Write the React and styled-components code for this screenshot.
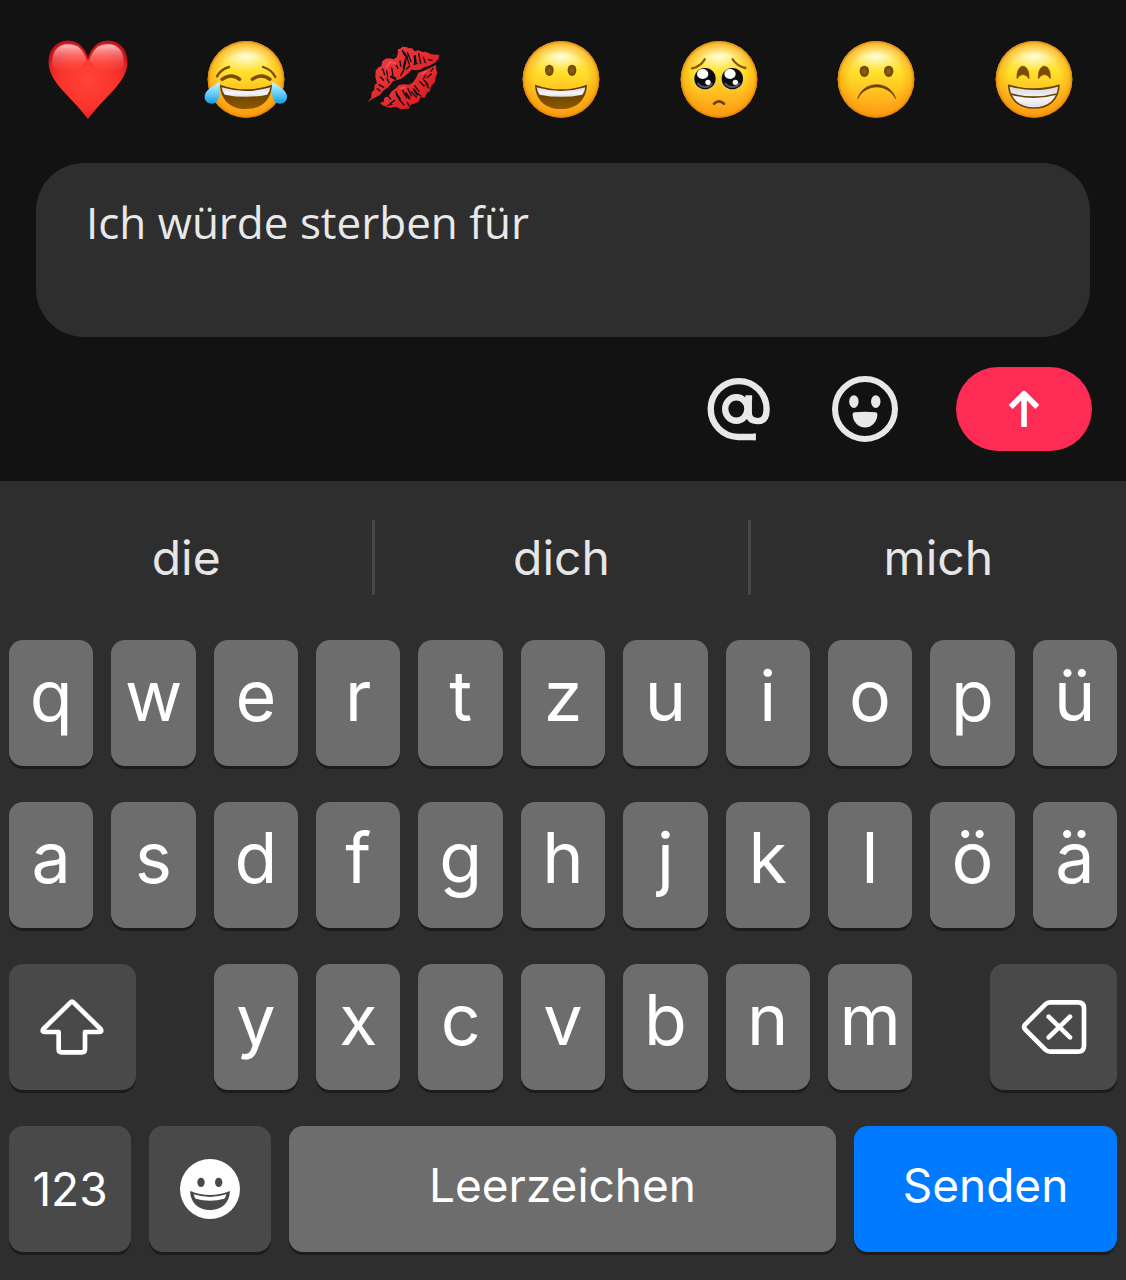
import React, { useState } from 'react';
import styled, { createGlobalStyle, css } from 'styled-components';

const GlobalStyle = createGlobalStyle`
  * { box-sizing: border-box; }
  body {
    margin: 0;
    background: #2e2e2e;
    font-family: Inter, "Liberation Sans", sans-serif;
  }
  button {
    border: 0;
    padding: 0;
    background: none;
    font-family: inherit;
    color: inherit;
    cursor: pointer;
  }
  svg { display: block; }
`;

const Composer = styled.section`
  background: #121212;
  padding-bottom: 30px;
`;

const EmojiBar = styled.div`
  display: grid;
  grid-template-columns: repeat(7, minmax(0, 1fr));
  padding: 37px 13px 42px 9px;
`;

const EmojiButton = styled.button`
  display: flex;
  justify-content: center;
`;

const MessageBox = styled.textarea`
  display: block;
  width: calc(100% - 72px);
  height: 174px;
  margin: 0 36px;
  padding: 31px 50px;
  border: 0;
  border-radius: 48px;
  outline: none;
  resize: none;
  background: #2e2e2e;
  color: #e8e8e8;
  font-family: "Open Sans", sans-serif;
  font-size: 44px;
  line-height: 56px;
`;

const Actions = styled.div`
  display: flex;
  justify-content: flex-end;
  align-items: center;
  padding: 30px 34px 0;
`;

const IconButton = styled.button`
  margin-right: 56px;
  color: #e8e8e8;
`;

const SendButton = styled.button`
  display: flex;
  align-items: center;
  justify-content: center;
  width: 136px;
  height: 84px;
  border-radius: 42px;
  background: #fe2c55;
  color: #fff;
`;

const Keyboard = styled.section`
  background: #2e2e2e;
  padding-bottom: 28px;
`;

const Suggestions = styled.div`
  display: grid;
  grid-template-columns: repeat(3, minmax(0, 1fr));
  padding: 39px 0 45px;
`;

const Suggestion = styled.button`
  height: 75px;
  color: #e6e6e6;
  font-size: 48px;
  line-height: 75px;

  &:not(:last-child) {
    border-right: 3px solid #484848;
  }
`;

const Rows = styled.div`
  display: grid;
  gap: 36px;
  padding: 0 9px;
`;

const LetterRow = styled.div`
  display: grid;
  grid-template-columns: repeat(11, minmax(0, 1fr));
  gap: 18px;
`;

const BottomRow = styled.div`
  display: grid;
  grid-template-columns: 122fr 122fr 547fr 263fr;
  gap: 18px;
`;

const Key = styled.button`
  display: flex;
  align-items: center;
  justify-content: center;
  min-width: 0;
  height: 126px;
  border-radius: 14px;
  background: ${({ $tone }) => ({ dark: '#494949', blue: '#007aff' }[$tone] || '#6d6d6d')};
  box-shadow: 0 3px 0 #1c1c1c;
  color: #fff;
  font-size: 46px;
  font-weight: 400;
  ${({ $letter }) => $letter && css`
    padding-bottom: 16px;
    font-size: 70px;
  `}
  ${({ $word }) => $word && css`
    padding-bottom: 8px;
  `}
`;

const WideKey = styled(Key)`
  grid-column: span 2;
  width: 68%;
  justify-self: ${({ $end }) => ($end ? 'end' : 'start')};
`;

const EmojiSvg = ({ children }) => (
  <svg width="84" height="84" viewBox="0 0 252 252" aria-hidden="true">{children}</svg>
);

// shared gradients for every yellow face
const Gradients = () => (
  <svg width="0" height="0" style={{ position: 'absolute' }} aria-hidden="true">
    <defs>
      <linearGradient id="face" x1="0" y1="0" x2="0" y2="1">
        <stop offset="0" stopColor="#ffdf5a" />
        <stop offset="0.15" stopColor="#ffeb66" />
        <stop offset="0.42" stopColor="#ffe02a" />
        <stop offset="0.72" stopColor="#ffb91e" />
        <stop offset="1" stopColor="#ff9c18" />
      </linearGradient>
      <radialGradient id="rim">
        <stop offset="0.66" stopColor="#f79a0c" stopOpacity="0" />
        <stop offset="0.92" stopColor="#f79a0c" stopOpacity="0.5" />
        <stop offset="1" stopColor="#d97800" stopOpacity="0.9" />
      </radialGradient>
      <radialGradient id="shine">
        <stop offset="0" stopColor="#fffef0" stopOpacity="0.9" />
        <stop offset="1" stopColor="#fff9a0" stopOpacity="0" />
      </radialGradient>
      <linearGradient id="teeth" x1="0" y1="0" x2="0" y2="1">
        <stop offset="0" stopColor="#d5d5dc" />
        <stop offset="0.6" stopColor="#f6f6fa" />
        <stop offset="1" stopColor="#dcdce2" />
      </linearGradient>
      <linearGradient id="mouth" x1="0" y1="0" x2="0" y2="1">
        <stop offset="0" stopColor="#5b3500" />
        <stop offset="1" stopColor="#8d5800" />
      </linearGradient>
      <radialGradient id="eye">
        <stop offset="0" stopColor="#9a6410" />
        <stop offset="1" stopColor="#6b3f02" />
      </radialGradient>
      <linearGradient id="tear" x1="0" y1="0" x2="0" y2="1">
        <stop offset="0" stopColor="#d5f6ff" />
        <stop offset="0.55" stopColor="#62cdfb" />
        <stop offset="1" stopColor="#159be6" />
      </linearGradient>
      <radialGradient id="heart" cx="0.5" cy="0.5" r="0.62">
        <stop offset="0" stopColor="#ff4337" />
        <stop offset="0.6" stopColor="#fa322c" />
        <stop offset="1" stopColor="#cf1520" />
      </radialGradient>
      <linearGradient id="heartShine" x1="0" y1="0" x2="0" y2="1">
        <stop offset="0" stopColor="#ffd2d2" stopOpacity="0.9" />
        <stop offset="0.4" stopColor="#ff8a85" stopOpacity="0.5" />
        <stop offset="0.85" stopColor="#ff5a50" stopOpacity="0" />
      </linearGradient>
      <linearGradient id="lips" x1="0" y1="0" x2="1" y2="1">
        <stop offset="0" stopColor="#f0414a" />
        <stop offset="0.5" stopColor="#e42a2f" />
        <stop offset="1" stopColor="#d9101a" />
      </linearGradient>
    </defs>
  </svg>
);

const Face = () => (
  <>
    <circle cx="126" cy="127" r="115" fill="url(#face)" />
    <ellipse cx="126" cy="60" rx="82" ry="44" fill="url(#shine)" />
    <circle cx="126" cy="127" r="115" fill="url(#rim)" />
  </>
);

const OpenMouth = () => (
  <>
    <path d="M48 143Q126 171 204 143C202 190 172 216 126 216S50 190 48 143Z" fill="url(#mouth)" />
    <path d="M53 151Q126 173 199 151Q198 163 190 173Q126 186 62 173Q54 163 53 151Z" fill="url(#teeth)" />
  </>
);

const Heart = () => (
  <EmojiSvg>
    <path d="M126 66C114 27 92 11 66 11C31 11 8 38 8 75C8 137 72 174 126 246C180 174 244 137 244 75C244 38 221 11 186 11C160 11 138 27 126 66Z" fill="url(#heart)" />
    <path d="M126 68C114 32 92 15 66 15C34 15 12 40 12 75M126 68C138 32 160 15 186 15C218 15 240 40 240 75" fill="none" stroke="#b5101a" strokeWidth="7" opacity="0.65" />
    <path d="M121 70C112 36 94 22 66 22C35 22 19 45 19 74C19 94 28 108 40 122C80 122 100 100 121 70Z" fill="url(#heartShine)" />
    <path d="M131 70C140 36 158 22 186 22C217 22 233 45 233 74C233 94 224 108 212 122C172 122 152 100 131 70Z" fill="url(#heartShine)" />
  </EmojiSvg>
);

const Joy = () => (
  <EmojiSvg>
    <Face />
    <g fill="none" stroke="#7b4a03" strokeLinecap="round">
      <path d="M39 118Q51 96 75 90M177 90Q203 98 214 120" strokeWidth="7" />
      <path d="M54 127Q82 107 107 127M145 127Q172 107 198 127" strokeWidth="10" />
    </g>
    <OpenMouth />
    <path d="M46 134C22 151 2 160 2 180C2 192 11 200 23 200C48 200 49 164 46 134Z" fill="url(#tear)" />
    <path d="M205 134C229 151 249 160 249 180C249 192 240 200 228 200C203 200 202 164 205 134Z" fill="url(#tear)" />
  </EmojiSvg>
);

const Kiss = () => (
  <EmojiSvg>
    <path d="M19 196L31 182L32 166L40 158L41 143L48 139L43 120L44 101L52 91L61 88L64 73L74 65L86 64L98 67L107 61L111 47L110 37L118 35L124 29L137 30L143 34L152 33L161 43L172 40L184 45L194 44L211 52L235 54L232 66L222 77L205 86L190 91L178 98L164 100L151 98L139 112L119 126L97 132L82 150L67 161L57 174L38 184Z" fill="url(#lips)" />
    <path d="M57 198L68 194L70 182L83 177L92 163L103 155L115 143L130 142L143 143L155 137L165 123L172 107L188 101L205 94L225 84L226 98L229 108L224 120L222 135L210 148L207 162L198 167L191 183L179 181L172 195L159 200L149 203L144 215L131 215L121 217L104 209L88 212L79 211L64 204Z" fill="url(#lips)" />
    <g fill="none" stroke="#121212" strokeLinecap="round">
      <path d="M124 40L140 68L145 82M139 46L150 74M134 65L128 99L119 116M146 87L136 96M163 56L160 82L169 79M173 50L179 80M187 61L193 77M117 72L119 87M106 85L110 94M92 93L96 115M77 102L80 118M65 96L71 113M58 120L68 130M54 143L68 151M49 155L57 162M203 68L213 70M84 137L78 124" strokeWidth="4" />
      <path d="M128 47L138 60M161 59L164 76M133 73L128 92M103 125L91 119" strokeWidth="7" />
      <path d="M89 186L78 174M101 190L88 199M109 178L105 164M119 194L109 177M129 204L120 193M137 183L125 160M151 177L141 155M166 180L151 165M174 164L161 146M180 177L170 170M189 147L176 133M202 143L189 130M194 114L187 126M211 111L198 122M216 94L210 103M204 153L194 142M144 207L139 197M93 202L79 206" strokeWidth="4" />
      <path d="M107 172L117 186M135 169L145 184M158 157L169 173" strokeWidth="6" />
    </g>
    <path d="M76 90L88 75L104 80M182 112L196 102M120 154L130 151" fill="none" stroke="#ff7b80" strokeWidth="5" strokeLinecap="round" opacity="0.45" />
  </EmojiSvg>
);

const Grinning = () => (
  <EmojiSvg>
    <Face />
    <ellipse cx="91" cy="100" rx="13" ry="17" fill="url(#eye)" />
    <ellipse cx="159" cy="100" rx="13" ry="17" fill="url(#eye)" />
    <OpenMouth />
  </EmojiSvg>
);

const Pleading = () => (
  <EmojiSvg>
    <Face />
    <path d="M45 94Q69 90 83 67M167 67Q180 87 205 93" fill="none" stroke="#8d5705" strokeWidth="7" strokeLinecap="round" />
    {[84, 166].map((x) => (
      <g key={x}>
        <circle cx={x} cy="126" r="34" fill="#e7c98a" />
        <circle cx={x} cy="125" r="32" fill="#0c0c0e" />
        <path d={`M${x - 22} 138A26 26 0 0 0 ${x + 22} 138`} fill="none" stroke="#55585e" strokeWidth="6" />
        <ellipse cx={x - 7} cy="111" rx="17" ry="15" fill="#fff" />
        <circle cx={x + 9} cy="136" r="8" fill="#fff" />
      </g>
    ))}
    <path d="M111 200Q126 186 141 200" fill="none" stroke="#6d4002" strokeWidth="8" strokeLinecap="round" />
  </EmojiSvg>
);

const Frowning = () => (
  <EmojiSvg>
    <Face />
    <ellipse cx="91" cy="103" rx="14" ry="17" fill="url(#eye)" />
    <ellipse cx="164" cy="103" rx="14" ry="17" fill="url(#eye)" />
    <path d="M71 185C87 129 169 129 185 185C160 138 96 138 71 185Z" fill="#6d4002" stroke="#6d4002" strokeWidth="2" strokeLinejoin="round" />
  </EmojiSvg>
);

const Beaming = () => (
  <EmojiSvg>
    <Face />
    <path d="M75 125C72 75 114 75 111 125Q93 100 75 125ZM139 125C136 75 178 75 175 125Q157 100 139 125Z" fill="#7d4a04" stroke="#7d4a04" strokeWidth="2" strokeLinejoin="round" />
    <path d="M50 145Q126 168 201 145C199 188 170 213 126 213S52 188 50 145Z" fill="url(#teeth)" stroke="#6d4304" strokeWidth="5" strokeLinejoin="round" />
    <path d="M57 171Q126 190 194 171" fill="none" stroke="#6d4304" strokeWidth="5" />
  </EmojiSvg>
);

const AtIcon = () => (
  <svg width="70" height="70" viewBox="3 0 208 208" fill="none" stroke="currentColor" strokeWidth="19" aria-hidden="true">
    <path d="M156 187H104A83 83 0 1 1 189 104C189 128 180 140 164 140C146 140 136 132 136 116V69" strokeLinejoin="round" />
    <ellipse cx="99" cy="104" rx="33" ry="35" />
    <path d="M136 63V80M150 187H157" strokeWidth="20" />
  </svg>
);

const SmileIcon = () => (
  <svg width="70" height="70" viewBox="0 0 208 208" fill="currentColor" aria-hidden="true">
    <circle cx="104" cy="104" r="89" fill="none" stroke="currentColor" strokeWidth="18" />
    <ellipse cx="71" cy="82" rx="14" ry="19" />
    <ellipse cx="136" cy="82" rx="14" ry="19" />
    <path d="M72 114Q104 110 136 114Q141 115 141 121C139 145 122 159 104 159S69 145 67 121Q67 115 72 114Z" />
  </svg>
);

const ArrowIcon = () => (
  <svg width="40" height="40" viewBox="0 0 120 120" fill="none" stroke="currentColor" strokeWidth="17" aria-hidden="true">
    <path d="M60 14V114" />
    <path d="M20 54L60 14L100 54" strokeLinejoin="round" />
  </svg>
);

const ShiftIcon = () => (
  <svg width="68" height="60" viewBox="0 0 204 180" fill="none" stroke="currentColor" strokeWidth="14" strokeLinejoin="round" aria-hidden="true">
    <path d="M97 17Q102 12 107 17L188 96Q193 105 184 105H141V157Q141 166 132 166H71Q62 166 62 157V105H20Q11 105 16 96Z" />
  </svg>
);

const DeleteIcon = () => (
  <svg width="68" height="60" viewBox="0 0 204 180" fill="none" stroke="currentColor" strokeWidth="14" strokeLinejoin="round" strokeLinecap="round" aria-hidden="true">
    <path d="M90 16H174Q192 16 192 34V146Q192 164 174 164H90Q82 164 76 158L16 98Q9 90 16 82L76 22Q82 16 90 16Z" />
    <path d="M86 59L150 121M150 59L86 121" />
  </svg>
);

const EmojiKeyIcon = () => (
  <svg width="68" height="68" viewBox="0 0 204 204" aria-hidden="true">
    <circle cx="102" cy="102" r="90" fill="#fff" />
    <ellipse cx="75" cy="82" rx="11" ry="14" fill="#494949" />
    <ellipse cx="128" cy="82" rx="11" ry="14" fill="#494949" />
    <path d="M42 108Q102 132 162 108C160 146 136 165 102 165S44 146 42 108Z" fill="#494949" />
    <path d="M53 118Q102 134 151 118Q149 127 145 131Q102 143 59 131Q55 127 53 118Z" fill="#fff" />
  </svg>
);

const emojis = [
  ['Herz', Heart],
  ['Freudentränen', Joy],
  ['Kussabdruck', Kiss],
  ['Grinsen', Grinning],
  ['Flehend', Pleading],
  ['Traurig', Frowning],
  ['Strahlend', Beaming],
];

const App = () => {
  const [message, setMessage] = useState('Ich würde sterben für');

  const type = (text) => setMessage((old) => old + text);
  const addWord = (word) => setMessage((old) => `${old.trimEnd()} ${word} `);

  const renderLetters = (letters) => [...letters].map((letter) => (
    <Key key={letter} type="button" $letter onClick={() => type(letter)}>{letter}</Key>
  ));

  return (
    <>
      <GlobalStyle />
      <Gradients />
      <Composer>
        <EmojiBar>
          {emojis.map(([label, Icon]) => (
            <EmojiButton key={label} type="button" aria-label={label}><Icon /></EmojiButton>
          ))}
        </EmojiBar>
        <MessageBox
          aria-label="Kommentar"
          spellCheck={false}
          value={message}
          onChange={(e) => setMessage(e.target.value)}
        />
        <Actions>
          <IconButton type="button" aria-label="Erwähnen"><AtIcon /></IconButton>
          <IconButton type="button" aria-label="Emoji"><SmileIcon /></IconButton>
          <SendButton type="button" aria-label="Kommentar senden"><ArrowIcon /></SendButton>
        </Actions>
      </Composer>
      <Keyboard>
        <Suggestions>
          {['die', 'dich', 'mich'].map((word) => (
            <Suggestion key={word} type="button" onClick={() => addWord(word)}>{word}</Suggestion>
          ))}
        </Suggestions>
        <Rows>
          <LetterRow>{renderLetters('qwertzuiopü')}</LetterRow>
          <LetterRow>{renderLetters('asdfghjklöä')}</LetterRow>
          <LetterRow>
            <WideKey type="button" $tone="dark" aria-label="Umschalttaste"><ShiftIcon /></WideKey>
            {renderLetters('yxcvbnm')}
            <WideKey
              type="button"
              $tone="dark"
              $end
              aria-label="Löschen"
              onClick={() => setMessage((old) => old.slice(0, -1))}
            >
              <DeleteIcon />
            </WideKey>
          </LetterRow>
          <BottomRow>
            <Key type="button" $tone="dark">123</Key>
            <Key type="button" $tone="dark" aria-label="Emoji-Tastatur"><EmojiKeyIcon /></Key>
            <Key type="button" $word onClick={() => type(' ')}>Leerzeichen</Key>
            <Key type="button" $word $tone="blue">Senden</Key>
          </BottomRow>
        </Rows>
      </Keyboard>
    </>
  );
};

export default App;
